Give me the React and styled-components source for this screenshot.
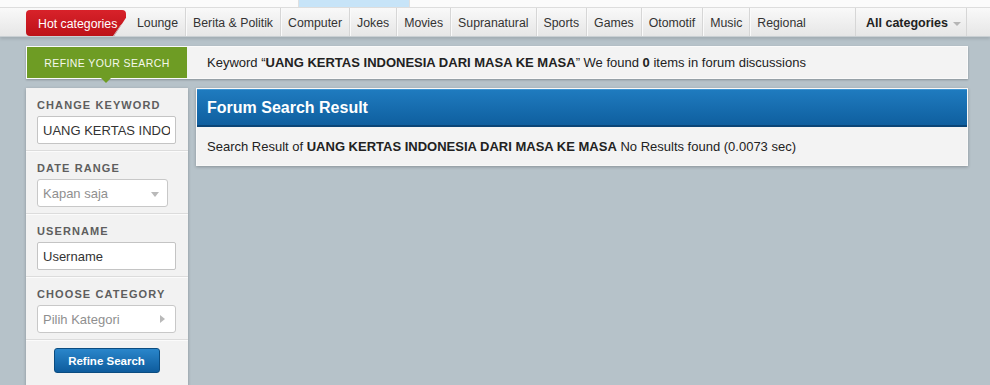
import React from 'react';
import styled, { createGlobalStyle } from 'styled-components';

const navItems = ['Lounge', 'Berita & Politik', 'Computer', 'Jokes', 'Movies', 'Supranatural', 'Sports', 'Games', 'Otomotif', 'Music', 'Regional'];
const keyword = 'UANG KERTAS INDONESIA DARI MASA KE MASA';

export default function App(){
    return(
        <Page>
            <GlobalStyle/>
            <TopStrip>
                <TopTab/>
            </TopStrip>

            <NavBar>
                <NavInner>
                    <HotTab>Hot categories</HotTab>
                    {navItems.map((item, i) => (
                        <NavItem key={item} $first={i === 0} $last={i === navItems.length - 1}>{item}</NavItem>
                    ))}
                    <AllCategories>
                        All categories <Caret/>
                    </AllCategories>
                </NavInner>
            </NavBar>

            <Content>
                <RefineBar>
                    <RefineTab>REFINE YOUR SEARCH</RefineTab>
                    <KeywordInfo>
                        Keyword “<b>{keyword}</b>” We found <b>0</b> items in forum discussions
                    </KeywordInfo>
                </RefineBar>

                <Columns>
                    <Sidebar>
                        <Section>
                            <Label>Change keyword</Label>
                            <TextInput type='text' defaultValue={keyword} />
                        </Section>
                        <Section>
                            <Label>Date range</Label>
                            <FakeSelect $width='131px'>
                                Kapan saja
                                <DownArrow/>
                            </FakeSelect>
                        </Section>
                        <Section>
                            <Label>Username</Label>
                            <TextInput type='text' defaultValue='Username' />
                        </Section>
                        <Section>
                            <Label>Choose category</Label>
                            <FakeSelect $width='139px'>
                                Pilih Kategori
                                <RightArrow/>
                            </FakeSelect>
                        </Section>
                        <ButtonSection>
                            <RefineButton type='button'>Refine Search</RefineButton>
                        </ButtonSection>
                    </Sidebar>

                    <ResultPanel>
                        <ResultHeader>Forum Search Result</ResultHeader>
                        <ResultBody>
                            Search Result of <b>{keyword}</b> No Results found (0.0073 sec)
                        </ResultBody>
                    </ResultPanel>
                </Columns>
            </Content>
        </Page>
    )
}

const GlobalStyle = createGlobalStyle`
    html, body {
        margin: 0;
        padding: 0;
        background: #b6c2c9;
        font-family: "Liberation Sans", Arial, sans-serif;
    }
    * { box-sizing: border-box; }
`;

//containers
const Page = styled.div`
    width: 990px;
    height: 385px;
    overflow: hidden;
    background: #b6c2c9;
`;

const TopStrip = styled.div`
    display: flex;
    height: 8px;
    background: #fbfbfb;
    border-bottom: 1px solid #dedede;
    padding-left: 298px;
`;

const TopTab = styled.div`
    flex: none;
    width: 112px;
    height: 7px;
    background: #c7e4f8;
    border-left: 1px solid #e0e0e0;
    border-right: 1px solid #e0e0e0;
`;

// nav
const NavBar = styled.div`
    height: 29px;
    background: linear-gradient(#f9f9f9, #e6e6e6);
    border-bottom: 1px solid #c9cfd3;
    box-shadow: 0 2px 3px rgba(0,0,0,0.12);
    position: relative;
`;

const NavInner = styled.div`
    display: flex;
    align-items: stretch;
    height: 100%;
    margin-left: 26px;
    width: 941px;
    font-size: 12.3px;
    color: #333;
`;

const HotTab = styled.div`
    position: relative;
    display: flex;
    align-items: center;
    flex: none;
    width: 100px;
    margin-top: 2px;
    height: 26px;
    padding: 1px 0 0 12px;
    white-space: nowrap;
    color: #fff;
    background: linear-gradient(#d8222a, #bd1118);
    border-radius: 4px;
    clip-path: polygon(0 0, 100% 0, 100% 30%, 88% 100%, 0 100%);
    &::after{
        content: '';
        position: absolute;
        right: 0;
        bottom: 0;
        width: 13px;
        height: 19px;
        background: linear-gradient(135deg, transparent 50%, #c9c9c9 50%, #ececec);
        clip-path: polygon(100% 0, 100% 100%, 0 100%);
    }
`;

const NavItem = styled.div`
    display: flex;
    align-items: center;
    padding: 2px 7px 0;
    white-space: nowrap;
    margin-left: ${p => p.$first ? '4px' : '0'};
    border-right: ${p => p.$last ? 'none' : '1px solid #d6d6d6'};
    box-shadow: ${p => p.$last ? 'none' : '1px 0 0 #fafafa'};
`;

const AllCategories = styled.div`
    display: flex;
    align-items: center;
    margin-left: auto;
    width: 112px;
    padding: 2px 0 0 10px;
    font-weight: bold;
    font-size: 12.5px;
    color: #222;
    border-left: 1px solid #d6d6d6;
    border-right: 1px solid #d6d6d6;
`;

const Caret = styled.span`
    margin-left: 5px;
    margin-top: 2px;
    border-left: 4px solid transparent;
    border-right: 4px solid transparent;
    border-top: 4px solid #b5b5b5;
`;

// content
const Content = styled.div`
    padding: 9px 0 0 26px;
    width: 968px;
`;

const RefineBar = styled.div`
    display: flex;
    align-items: stretch;
    height: 33px;
    background: #f3f3f3;
    border: 1px solid #fafafa;
    box-shadow: 0 1px 2px rgba(0,0,0,0.25);
`;

const RefineTab = styled.div`
    position: relative;
    display: flex;
    align-items: center;
    justify-content: center;
    width: 160px;
    background: #6e9c24;
    color: #f4f8ec;
    font-size: 10.5px;
    letter-spacing: 0.4px;
    &::after{
        content: '';
        position: absolute;
        left: 74px;
        bottom: -5px;
        border-left: 5px solid transparent;
        border-right: 5px solid transparent;
        border-top: 5px solid #6e9c24;
    }
`;

const KeywordInfo = styled.div`
    display: flex;
    align-items: center;
    white-space: pre;
    padding-left: 20px;
    font-size: 13px;
    color: #222;
`;

const Columns = styled.div`
    display: flex;
    align-items: flex-start;
    gap: 8px;
    margin-top: 9px;
`;

// sidebar
const Sidebar = styled.div`
    width: 162px;
    height: 320px;
    background: #f2f2f2;
    box-shadow: 0 1px 3px rgba(0,0,0,0.25);
`;

const Section = styled.div`
    padding: 11px 11px 6px;
    border-bottom: 1px solid #dcdcdc;
    box-shadow: 0 1px 0 #fbfbfb;
`;

const Label = styled.div`
    font-size: 11px;
    line-height: 13px;
    font-weight: bold;
    letter-spacing: 1.1px;
    text-transform: uppercase;
    color: #5e5e5e;
    margin-bottom: 4px;
`;

const TextInput = styled.input`
    display: block;
    width: 139px;
    height: 28px;
    margin: 0;
    padding: 0 5px;
    border: 1px solid #c4c4c4;
    border-radius: 2px;
    background: #fff;
    font-family: "Liberation Sans", Arial, sans-serif;
    font-size: 13px;
    color: #333;
    outline: none;
`;

const FakeSelect = styled.div`
    display: flex;
    align-items: center;
    justify-content: space-between;
    width: ${p => p.$width};
    height: 28px;
    padding: 0 8px 0 5px;
    border: 1px solid #c8c8c8;
    border-radius: 3px;
    background: #fff;
    font-size: 13px;
    color: #8f8f8f;
`;

const DownArrow = styled.span`
    border-left: 4px solid transparent;
    border-right: 4px solid transparent;
    border-top: 5px solid #b9b9b9;
    margin-top: 2px;
`;

const RightArrow = styled.span`
    border-top: 4px solid transparent;
    border-bottom: 4px solid transparent;
    border-left: 5px solid #b9b9b9;
    margin-right: 2px;
`;

const ButtonSection = styled.div`
    display: flex;
    justify-content: center;
    padding-top: 8px;
    padding-right: 1px;
`;

const RefineButton = styled.button`
    width: 106px;
    height: 25px;
    border: 1px solid #0b4c80;
    border-radius: 3px;
    background: linear-gradient(#2a86cb, #0e5c9d);
    color: #fff;
    font-family: "Liberation Sans", Arial, sans-serif;
    font-size: 11.5px;
    font-weight: bold;
    padding: 0;
`;

// results
const ResultPanel = styled.div`
    flex: 1;
    background: #f3f3f3;
    border: 1px solid #f8f8f8;
    box-shadow: 0 1px 3px rgba(0,0,0,0.25);
`;

const ResultHeader = styled.div`
    display: flex;
    align-items: center;
    height: 38px;
    padding-left: 10px;
    background: linear-gradient(#1f7bbf, #0f5f9f);
    border-top: 1px solid #3f95d2;
    border-bottom: 2px solid #0a4577;
    color: #fff;
    font-size: 16px;
    font-weight: bold;
`;

const ResultBody = styled.div`
    display: flex;
    align-items: center;
    height: 38px;
    padding-left: 10px;
    white-space: pre;
    font-size: 13px;
    color: #222;
`;
